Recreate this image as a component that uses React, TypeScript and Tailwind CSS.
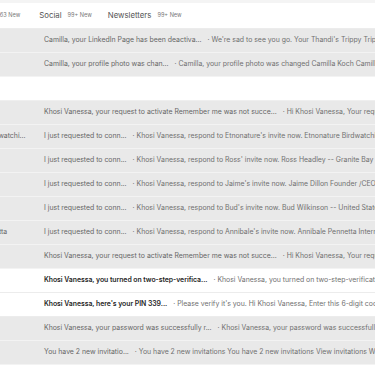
import React from 'react';

type Mail = {
  sender?: string;
  subject?: string;
  snippet?: string;
  unread?: boolean;
  blank?: boolean;
};

const mails: Mail[] = [
  { sender: 'LinkedIn', subject: 'Camilla, your LinkedIn Page has been deactiva...', snippet: "We're sad to see you go. Your Thandi's Trippy Trips Page has been deactivated" },
  { sender: 'LinkedIn', subject: 'Camilla, your profile photo was chan...', snippet: 'Camilla, your profile photo was changed Camilla Koch Camilla Koch' },
  { blank: true },
  { sender: 'LinkedIn', subject: 'Khosi Vanessa, your request to activate Remember me was not succe...', snippet: 'Hi Khosi Vanessa, Your request could not be completed' },
  { sender: 'Etnonature Birdwatchi...', subject: 'I just requested to conn...', snippet: "Khosi Vanessa, respond to Etnonature's invite now. Etnonature Birdwatching Tours" },
  { sender: 'Ross Headley', subject: 'I just requested to conn...', snippet: "Khosi Vanessa, respond to Ross' invite now. Ross Headley -- Granite Bay Resort" },
  { sender: 'Jaime Dillon', subject: 'I just requested to conn...', snippet: "Khosi Vanessa, respond to Jaime's invite now. Jaime Dillon Founder /CEO" },
  { sender: 'Bud Wilkinson', subject: 'I just requested to conn...', snippet: "Khosi Vanessa, respond to Bud's invite now. Bud Wilkinson -- United States" },
  { sender: 'Annibale Pennetta', subject: 'I just requested to conn...', snippet: "Khosi Vanessa, respond to Annibale's invite now. Annibale Pennetta International" },
  { sender: 'LinkedIn', subject: 'Khosi Vanessa, your request to activate Remember me was not succe...', snippet: 'Hi Khosi Vanessa, Your request could not be completed' },
  { sender: 'Google', subject: 'Khosi Vanessa, you turned on two-step-verifica...', snippet: 'Khosi Vanessa, you turned on two-step-verification', unread: true },
  { sender: 'LinkedIn', subject: "Khosi Vanessa, here's your PIN 339...", snippet: "Please verify it's you. Hi Khosi Vanessa, Enter this 6-digit code", unread: true },
  { sender: 'LinkedIn', subject: 'Khosi Vanessa, your password was successfully r...', snippet: 'Khosi Vanessa, your password was successfully reset' },
  { sender: 'LinkedIn', subject: 'You have 2 new invitatio...', snippet: 'You have 2 new invitations You have 2 new invitations View invitations With' },
];

const Row: React.FC<{ mail: Mail }> = ({ mail }) => {
  if (mail.blank) {
    return <div className="h-[24px] bg-white border-b border-[#efefef]" />;
  }
  return (
    <div
      className={`h-[24px] flex items-center whitespace-nowrap border-b ${
        mail.unread ? 'bg-white border-[#ececec]' : 'bg-[#e9e9e9] border-[#f3f3f3]'
      }`}
    >
      <div className={`w-[96px] shrink-0 ${mail.unread ? 'text-[#222] font-semibold' : 'text-[#666]'}`}>
        {mail.sender}
      </div>
      <span className={mail.unread ? 'text-[#1f1f1f] font-semibold tracking-[-0.05px]' : 'text-[#666]'}>
        {mail.subject}
      </span>
      <span className="ml-[6px] text-[#707070]">· {mail.snippet}</span>
    </div>
  );
};

const App: React.FC = () => {
  return (
    <div
      className="w-[375px] h-[366px] overflow-hidden bg-white text-[6.9px]"
      style={{ fontFamily: 'Inter, "Noto Sans", sans-serif' }}
    >
      <div className="h-[3px] bg-[#f4f4f4]" />
      <div className="h-[26px] flex items-center whitespace-nowrap border-b border-[#ececec] -ml-[37px]">
        <span className="text-[7.8px] text-[#555]">Primary</span>
        <span className="ml-[6px] text-[5.6px] text-[#777]">163 New</span>
        <span className="ml-[19px] text-[7.8px] text-[#555]">Social</span>
        <span className="ml-[6px] text-[5.6px] text-[#777]">99+ New</span>
        <span className="ml-[16px] text-[7.8px] text-[#555]">Newsletters</span>
        <span className="ml-[6px] text-[5.6px] text-[#777]">99+ New</span>
      </div>
      <div className="-ml-[52px] w-[700px]">
        {mails.map((m, i) => (
          <Row key={i} mail={m} />
        ))}
      </div>
    </div>
  );
};

export default App;
